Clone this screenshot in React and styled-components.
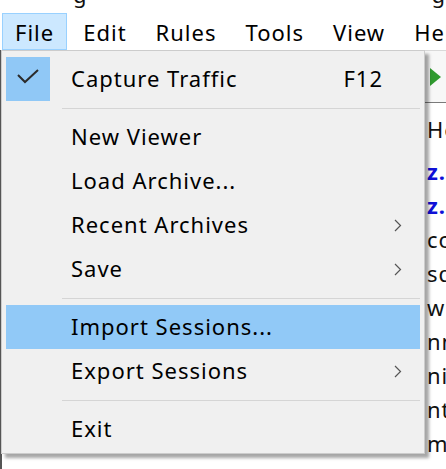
import React from "react";
import styled, { createGlobalStyle } from "styled-components";

const GlobalStyle = createGlobalStyle`
  html, body {
    margin: 0;
    padding: 0;
    background: #ffffff;
  }
  body {
    font-family: "Noto Sans", "Open Sans", sans-serif;
    font-size: 22px;
    letter-spacing: 1px;
    color: #000;
  }
`;

const menuNames = ["File", "Edit", "Rules", "Tools", "View", "Help"];

const fileMenu = [
  { label: "Capture Traffic", shortcut: "F12", checked: true },
  { sep: true },
  { label: "New Viewer" },
  { label: "Load Archive..." },
  { label: "Recent Archives", sub: true },
  { label: "Save", sub: true },
  { sep: true },
  { label: "Import Sessions...", hover: true },
  { label: "Export Sessions", sub: true },
  { sep: true },
  { label: "Exit" },
];

const sessions = [
  { host: "z.cn", blue: true },
  { host: "z.cn", blue: true },
  { host: "config.pinyin" },
  { host: "sdk.hao" },
  { host: "wb.pc.qq" },
  { host: "nnn.cdn" },
  { host: "nimg.api" },
  { host: "ntp.msn" },
  { host: "mkt.com" },
  { url: "/api/status" },
];

function App() {
  return (
    <>
      <GlobalStyle />
      <Screen>
        <TitleBar>
          <Logo width="14" height="12" viewBox="0 0 14 12">
            <path d="M0 0 L14 0 L7 6 Z" fill="#3aa33a" />
          </Logo>
          <TitleGlyph $left={54}>g</TitleGlyph>
          <TitleGlyph $left={344}>g</TitleGlyph>
        </TitleBar>

        <MenuBar>
          {menuNames.map((name) => (
            <MenuBarItem key={name} $open={name === "File"}>
              {name}
            </MenuBarItem>
          ))}
        </MenuBar>

        <Workspace>
          <Toolbar>
            <svg width="11" height="18" viewBox="0 0 11 18">
              <path d="M0 0 L11 9 L0 18 Z" fill="#2f9a2f" />
            </svg>
          </Toolbar>
          <ListHeader>
            <HostCell>Host</HostCell>
          </ListHeader>
          {sessions.map((s, i) => (
            <SessionRow key={i}>
              <UrlCell>{s.url}</UrlCell>
              <HostCell $blue={s.blue}>{s.host}</HostCell>
            </SessionRow>
          ))}
        </Workspace>

        <Dropdown>
          {fileMenu.map((item, i) =>
            item.sep ? (
              <Separator key={i} />
            ) : (
              <MenuItem key={i} $hover={item.hover}>
                <CheckBox $checked={item.checked}>
                  {item.checked && (
                    <svg width="44" height="44" viewBox="0 0 44 44">
                      <polyline
                        points="12,18 19,25 32,13"
                        fill="none"
                        stroke="#2b2b2b"
                        strokeWidth="2"
                      />
                    </svg>
                  )}
                </CheckBox>
                <ItemLabel>{item.label}</ItemLabel>
                <Shortcut>{item.shortcut}</Shortcut>
                <Arrow>
                  {item.sub && (
                    <svg width="8" height="13" viewBox="0 0 8 13">
                      <polyline
                        points="1,1 6.5,6.5 1,12"
                        fill="none"
                        stroke="#555"
                        strokeWidth="1.2"
                      />
                    </svg>
                  )}
                </Arrow>
              </MenuItem>
            )
          )}
        </Dropdown>
      </Screen>
    </>
  );
}

const Screen = styled.div`
  position: relative;
  width: 446px;
  height: 469px;
  overflow: hidden;
  background: #ffffff;
`;

const TitleBar = styled.div`
  position: relative;
  height: 12px;
  display: flex;
  align-items: flex-end;
  overflow: hidden;
`;

const Logo = styled.svg`
  margin-left: 12px;
  margin-bottom: 6px;
`;

/* only the descender of the cut-off title text shows */
const TitleGlyph = styled.span`
  margin-left: ${(p) => p.$left}px;
  line-height: 22px;
  margin-bottom: 7px;
  color: #111;
`;

const MenuBar = styled.div`
  height: 38px;
  display: flex;
  align-items: flex-end;
  gap: 3px;
  padding-left: 2px;
  background: #ffffff;
`;

const MenuBarItem = styled.div`
  box-sizing: border-box;
  height: 37px;
  padding: 0 12px;
  display: flex;
  align-items: center;
  color: #000;
  border: 1px solid ${(p) => (p.$open ? "#99d1ff" : "transparent")};
  background: ${(p) => (p.$open ? "#cce8ff" : "transparent")};
`;

const Workspace = styled.div`
  border-left: 2px solid #555;
`;

const Toolbar = styled.div`
  height: 53px;
  box-sizing: border-box;
  border-top: 1px solid #d9d9d9;
  border-bottom: 1px solid #7a7a7a;
  background: #f7f7f7;
  display: flex;
  align-items: center;
  padding-left: 428px;
`;

const ListHeader = styled.div`
  height: 51px;
  display: grid;
  grid-template-columns: 425px 1fr;
  align-items: center;
  & > * {
    grid-column: 2;
  }
`;

const SessionRow = styled.div`
  height: 34px;
  display: grid;
  grid-template-columns: 306px 119px 1fr;
  align-items: center;
`;

const UrlCell = styled.div`
  grid-column: 1;
  padding-left: 306px;
  white-space: nowrap;
`;

const HostCell = styled.div`
  grid-column: 3;
  white-space: nowrap;
  color: ${(p) => (p.$blue ? "#1010d8" : "#111")};
  font-weight: ${(p) => (p.$blue ? 700 : 400)};
`;

const Dropdown = styled.div`
  position: absolute;
  left: 1px;
  top: 50px;
  width: 424px;
  box-sizing: border-box;
  padding: 6px 4px 2px 4px;
  background: #f0f0f0;
  border: 1px solid #cccccc;
  box-shadow: 4px 4px 3px rgba(0, 0, 0, 0.35);
`;

const MenuItem = styled.div`
  height: 44px;
  display: grid;
  grid-template-columns: 44px 1fr auto 37px;
  align-items: center;
  background: ${(p) => (p.$hover ? "#91c9f7" : "transparent")};
`;

const CheckBox = styled.div`
  width: 44px;
  height: 44px;
  background: ${(p) => (p.$checked ? "#90c8f6" : "transparent")};
  svg {
    display: block;
  }
`;

const ItemLabel = styled.div`
  padding-left: 21px;
  margin-top: -3px;
  color: #000;
  white-space: nowrap;
`;

const Shortcut = styled.div`
  margin-top: -3px;
  color: #000;
`;

const Arrow = styled.div`
  display: flex;
  align-items: center;
  padding-left: 11px;
`;

const Separator = styled.div`
  height: 1px;
  margin: 7px 0 6px 56px;
  background: #d5d5d5;
`;

export default App;
